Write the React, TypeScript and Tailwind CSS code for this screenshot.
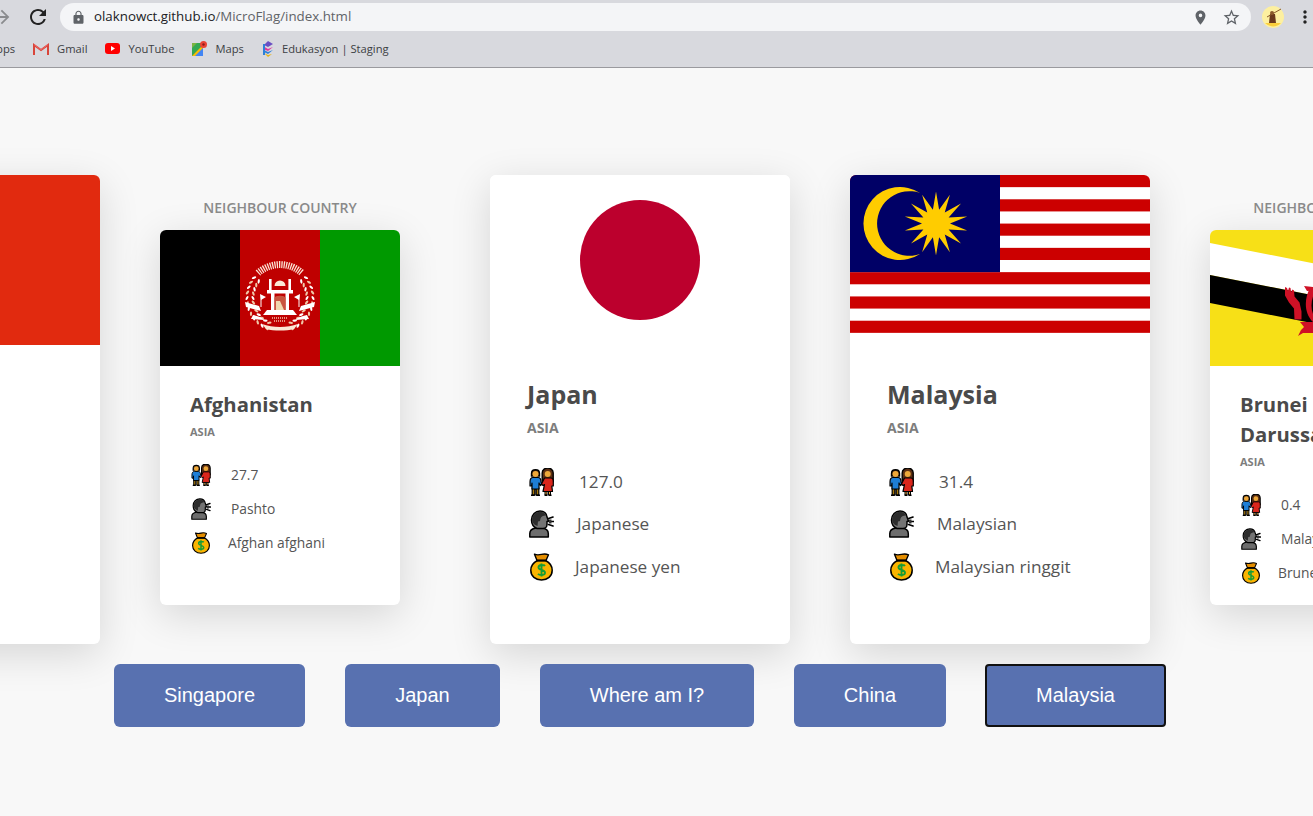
import { MdLock, MdMoreVert, MdPlace, MdRefresh, MdStarBorder, MdArrowForward } from "react-icons/md";

const uiFont = "font-['Open_Sans','Noto_Sans',sans-serif]";

function Couple({ className }: { className: string }) {
  return (
    <svg viewBox="0 0 25 28" className={className}>
      <path d="M13.200 12V5c0-6.500 11-6.500 11 0v8.500h-11z" fill="#5c2f14" stroke="#000" strokeWidth="1.400" />
      <path d="M2.500 5.500C2.500.500 10.500.500 10.500 5.500V8h-8z" fill="#4a2a12" stroke="#000" strokeWidth="1.400" />
      <circle cx="6.500" cy="6" r="3" fill="#eda83a" />
      <circle cx="18.700" cy="6" r="3" fill="#eda83a" />
      <path d="M3.200 20v7h2.600v-6h1.400v6h2.600v-7z" fill="#a9790c" stroke="#000" strokeWidth="1.200" />
      <path d="M1 14c0-3 1-4.500 3-4.500h5c2 0 3 1.500 3 4.500l1 2-1.500 1.500L10 15v6H3v-6l-.500 3H1z" fill="#1e7ed6" stroke="#000" strokeWidth="1.200" strokeLinejoin="round" />
      <path d="M16 23h2v4h-2zM19.500 23h2v4h-2z" fill="#eda83a" stroke="#000" strokeWidth="1" />
      <path d="M15.500 10h6.500c1.500 0 2.300 1.500 2.300 4v4h-1.500l.700 5.500h-9.500l1.500-7-1.500 1-1.500-1.500z" fill="#d9261c" stroke="#000" strokeWidth="1.200" strokeLinejoin="round" />
      <path d="M2 26.500h3.800v1.500H2zM7.200 26.500H11v1.500H7.200zM15.500 26.500h3v1.500h-3zM19.500 26.500h3v1.500h-3z" fill="#000" />
    </svg>
  );
}

function Speaker({ className }: { className: string }) {
  return (
    <svg viewBox="0 0 25 28" className={className}>
      <path d="M.800 27v-3.500c0-3.500 3-5 6-5.500h6c4 .5 6.500 2 6.500 5.500V27z" fill="#6d6d6d" stroke="#000" strokeWidth="1.500" strokeLinejoin="round" />
      <path d="M2.500 10C2.500 4.500 6.500 1 11 1c4 0 6.500 2.500 7 6l1.500 4-1.500.500v3c0 2.500-2 4-4 4H8C4.500 17 2.500 14 2.500 10z" fill="#747474" stroke="#000" strokeWidth="1.500" strokeLinejoin="round" />
      <path d="M3.200 10C3.200 5 7 1.800 11 1.800c3 0 5 1.500 6 3.700-3 .2-5 1-5.500 3l-.5 2.500-2 .5-.5 4.500c-3-1-5.300-3-5.300-6.500z" fill="#2c2c2c" />
      <path d="M19.500 8.500l4.500-1.500M20 11.500h4.800M19.500 14.500l4.500 1.500" stroke="#000" strokeWidth="1.700" strokeLinecap="round" />
      <path d="M20 9.500h2.500v4H20z" fill="#333" />
    </svg>
  );
}

function MoneyBag({ className }: { className: string }) {
  return (
    <svg viewBox="0 0 25 28" className={className}>
      <path d="M8.500 7.500C4.500 9.500 1.800 13 1.800 17.300c0 6 4.700 9.700 10.700 9.700s10.700-3.700 10.700-9.700c0-4.300-2.700-7.800-6.700-9.800z" fill="#fab400" stroke="#000" strokeWidth="1.500" />
      <path d="M5.500 1.200c2.300 1 4.500.800 7 .2s4.700-.6 7 .4l-2.500 5.700H8z" fill="#e58e00" stroke="#000" strokeWidth="1.400" strokeLinejoin="round" />
      <path d="M8 7.500h9" stroke="#000" strokeWidth="1.800" />
      <path d="M16 13c-1-1.400-6.500-1.600-6.500 1.500 0 3 6.500 2 6.500 5.200 0 2.800-5.500 2.800-7 1.100M12.500 10.500v13" fill="none" stroke="#169c36" strokeWidth="1.900" />
    </svg>
  );
}

function AfghanFlag() {
  const sides = [-1, 1];
  const grains = [0, 1, 2, 3, 4, 5, 6, 7, 8, 9, 10, 11];
  const radii = [27, 33];
  return (
    <svg viewBox="0 0 240 136" className="block h-[136px] w-[240px]">
      <rect width="80" height="136" fill="#000" />
      <rect x="80" width="80" height="136" fill="#bf0000" />
      <rect x="160" width="80" height="136" fill="#009900" />
      <g transform="translate(120 68)">
        {sides.map((side) =>
          radii.map((r) =>
            grains.map((i) => {
              const deg = -38 + i * 9.500;
              const a = (deg * Math.PI) / 180;
              const x = side * Math.cos(a) * r;
              const y = Math.sin(a) * r;
              return (
                <ellipse
                  key={`${side}${r}${i}`}
                  cx={x}
                  cy={y}
                  rx="2.300"
                  ry="1.100"
                  fill={i % 2 === 0 ? "#fff" : "#f0c8a8"}
                  transform={`rotate(${side * (deg + 90 + (r === 27 ? 30 : -30))} ${x} ${y})`}
                />
              );
            })
          )
        )}
        <path d="M-22-25A33 33 0 0 1 22-25" fill="none" stroke="#fbe4d4" strokeWidth="7" strokeDasharray="1.300 1" />
        <path d="M-5.500-12a5.500 5.500 0 0 1 11 0z" fill="#fbe7d6" />
        <path d="M-11-19h2.600v11H-11zM8.400-19H11v11H8.400z" fill="#fff" />
        <path d="M-13-8h26v3.500h-26zM-9-4.500h3.500V12H-9zM5.500-4.500H9V12H5.500z" fill="#fff" />
        <path d="M-5.500 12V0c0-3 11-3 11 0v12z" fill="#c9553f" />
        <path d="M-4 12V3h4l4 9z" fill="#f1d9b0" />
        <path d="M-13 12h26l4 5h-34z" fill="#fff" />
        <path d="M-20-4l6 3-5 3zM20-4l-6 3 5 3z" fill="#fff" />
        <path d="M-19-3v12M19-3v12" stroke="#fff" strokeWidth="1" />
        <path d="M-35 4l14 4 2 5-15-4zM35 4l-14 4-2 5 15-4z" fill="#fff" />
        <path d="M-27 17c6 1 9 3 12 5l-14-1zM27 17c-6 1-9 3-12 5l14-1z" fill="#fff" />
        <path d="M-18 26c11 4 25 4 36 0l-4 5c-8 2-20 2-28 0z" fill="#fbe7d6" />
        <path d="M-8 20h16M-6 23h12" stroke="#f2c4a8" strokeWidth="1.500" strokeDasharray="1 1" />
      </g>
    </svg>
  );
}

function JapanFlag() {
  return (
    <svg viewBox="0 0 300 170" className="block h-[170px] w-[300px]">
      <rect width="300" height="170" fill="#fff" />
      <circle cx="150" cy="85" r="60" fill="#bc002d" />
    </svg>
  );
}

function MalaysiaFlag() {
  const stripeHeight = 170 / 14;
  const stripes = [0, 2, 4, 6, 8, 10, 12];
  const points = Array.from({ length: 28 }, (_, i) => {
    const r = i % 2 === 0 ? 32 : 14;
    const a = (i * Math.PI) / 14 - Math.PI / 2;
    return `${86 + r * Math.cos(a)},${48.500 + r * Math.sin(a)}`;
  }).join(" ");
  return (
    <svg viewBox="0 0 300 170" className="block h-[170px] w-[300px]">
      <rect width="300" height="170" fill="#fff" />
      {stripes.map((i) => (
        <rect key={i} y={i * stripeHeight} width="300" height={stripeHeight} fill="#cc0000" />
      ))}
      <rect width="150" height="97.100" fill="#000066" />
      <path d="M70 18A36.500 36.500 0 1 0 70 79A32.300 32.300 0 1 1 70 18z" fill="#ffcc00" />
      <polygon points={points} fill="#ffcc00" />
    </svg>
  );
}

function BruneiFlag() {
  return (
    <svg viewBox="0 0 240 136" className="block h-[136px] w-[240px]">
      <rect width="240" height="136" fill="#f7e017" />
      <path d="M0 13L240 60v32L0 45z" fill="#fff" />
      <path d="M0 45L240 92v28L0 73z" fill="#000" />
      <g fill="#cf1126">
        <path d="M75 57l2 1 1 3 1-3.500 1.500.500.500 4 1.500-2.500 1.500 1 .500 6 5 6 2 9v8h-7l-.500-11-5-6-4-7z" />
        <path d="M100 58c-6 11-6 25 3 34l8 5-5-7c-6-9-6-20 0-30z" />
        <path d="M90 92h13l8 6 .500 5H93l-5 3 3-6 3-3z" />
        <path d="M94 56l9 1 6 3-12 1z" />
      </g>
    </svg>
  );
}

function InfoRow({
  icon,
  text,
  large,
  indent,
}: {
  icon: "people" | "speech" | "money";
  text: string;
  large: boolean;
  indent: string;
}) {
  const iconClass = large ? "h-[28px] w-[25px] shrink-0" : "h-[22px] w-[20px] shrink-0";
  return (
    <div className={large ? "flex h-[42.500px] items-center text-[17.200px]" : "flex h-[34px] items-center text-[13.800px]"}>
      {icon === "people" && <Couple className={iconClass} />}
      {icon === "speech" && <Speaker className={iconClass} />}
      {icon === "money" && <MoneyBag className={iconClass} />}
      <span className={`${indent} whitespace-nowrap text-[#555]`}>{text}</span>
    </div>
  );
}

function LargeCard({
  flag,
  name,
  population,
  language,
  currency,
}: {
  flag: React.ReactNode;
  name: string;
  population: string;
  language: string;
  currency: string;
}) {
  return (
    <div className="h-[469px] w-[300px] shrink-0 overflow-hidden rounded-md bg-white shadow-[0_10px_40px_rgba(0,0,0,0.14)]">
      {flag}
      <div className="px-[37px] pt-[31px]">
        <h2 className="text-[25px] font-bold leading-[36px] text-[#4a4a4a]">{name}</h2>
        <p className="mt-[7px] text-[14px] font-bold leading-[18px] text-[#7d7d7d]">ASIA</p>
        <div className="mt-[23.500px] pl-[2px]">
          <InfoRow icon="people" text={population} large indent="ml-[25px]" />
          <InfoRow icon="speech" text={language} large indent="ml-[23px]" />
          <InfoRow icon="money" text={currency} large indent="ml-[21px]" />
        </div>
      </div>
    </div>
  );
}

function NeighbourCard({
  flag,
  name,
  population,
  language,
  currency,
}: {
  flag: React.ReactNode;
  name: string;
  population: string;
  language: string;
  currency: string;
}) {
  return (
    <div className="w-[240px] shrink-0">
      <p className="h-[55px] pt-[23px] text-center text-[14px] font-semibold leading-[20px] text-[#8a8a8a]">NEIGHBOUR COUNTRY</p>
      <div className="h-[375px] overflow-hidden rounded-md bg-white shadow-[0_10px_40px_rgba(0,0,0,0.14)]">
        {flag}
        <div className="px-[30px] pt-[23px]">
          <h3 className="text-[20.300px] font-bold leading-[30px] text-[#4a4a4a]">{name}</h3>
          <p className="mt-[5.500px] text-[11px] font-bold leading-[14px] text-[#7d7d7d]">ASIA</p>
          <div className="mt-[19.500px] pl-[1px]">
            <InfoRow icon="people" text={population} large={false} indent="ml-[20px]" />
            <InfoRow icon="speech" text={language} large={false} indent="ml-[20px]" />
            <InfoRow icon="money" text={currency} large={false} indent="ml-[17px]" />
          </div>
        </div>
      </div>
    </div>
  );
}

function Bookmark({ icon, label }: { icon: React.ReactNode; label: string }) {
  return (
    <span className="flex items-center gap-[8px] whitespace-nowrap">
      {icon}
      {label}
    </span>
  );
}

function BrowserBar() {
  return (
    <header className={`h-[68px] shrink-0 overflow-hidden border-b border-[#9a9a9e] bg-[#d8d9de] ${uiFont}`}>
      <div className="flex h-[34px] items-center">
        <MdArrowForward className="ml-[-9px] h-[22px] w-[22px] shrink-0 text-[#8a8b8e]" />
        <MdRefresh className="ml-[13px] h-[24px] w-[24px] shrink-0 text-[#222]" />
        <div className="ml-[10px] flex h-[28px] w-[1191px] shrink-0 items-center rounded-full bg-[#f4f5f7] pl-[11px] pr-[10px] text-[13.300px]">
          <MdLock className="h-[15px] w-[15px] text-[#5f6368]" />
          <span className="ml-[8px] text-[#202124]">olaknowct.github.io</span>
          <span className="text-[#5f6368]">/MicroFlag/index.html</span>
          <MdPlace className="ml-auto h-[17px] w-[17px] text-[#5f6368]" />
          <MdStarBorder className="ml-[13px] h-[19px] w-[19px] text-[#5f6368]" />
        </div>
        <svg viewBox="0 0 22 22" className="ml-[11px] h-[22px] w-[22px] shrink-0">
          <circle cx="11" cy="11" r="11" fill="#fdf0a0" />
          <path d="M3 17h16a11 11 0 0 1-16 0z" fill="#fbcf3c" />
          <path d="M8 8h5l1 9H7z" fill="#6b3a1c" />
          <path d="M5 11l14-8" stroke="#8b5a2b" strokeWidth="1" />
          <circle cx="10" cy="7" r="2" fill="#8b5a2b" />
        </svg>
        <MdMoreVert className="ml-[11px] h-[20px] w-[20px] shrink-0 text-[#222]" />
      </div>
      <div className="ml-[-11px] flex h-[30px] items-center gap-[18px] text-[11.200px] text-[#3c4043]">
        <span>Apps</span>
        <Bookmark
          label="Gmail"
          icon={
            <svg viewBox="0 0 16 12" className="h-[12px] w-[16px]">
              <path d="M1 12V2l7 5 7-5v10" fill="none" stroke="#d9453a" strokeWidth="2" />
              <path d="M1 1.500l7 5.500 7-5.500" fill="none" stroke="#e66" strokeWidth="1" />
            </svg>
          }
        />
        <Bookmark
          label="YouTube"
          icon={
            <svg viewBox="0 0 15 11" className="h-[11px] w-[15px]">
              <rect width="15" height="11" rx="3" fill="#f00" />
              <path d="M6 3l4 2.500L6 8z" fill="#fff" />
            </svg>
          }
        />
        <Bookmark
          label="Maps"
          icon={
            <svg viewBox="0 0 15 15" className="h-[15px] w-[15px]">
              <path d="M0 2h11v13H0z" fill="#34a853" />
              <path d="M0 15L11 4v11z" fill="#fbbc04" />
              <path d="M3 15l8-8v8z" fill="#4285f4" />
              <path d="M0 2h5L0 7z" fill="#7cb342" />
              <circle cx="11.500" cy="3.500" r="3.500" fill="#ea4335" />
              <circle cx="11.500" cy="3.500" r="1.200" fill="#8c1d18" />
            </svg>
          }
        />
        <Bookmark
          label="Edukasyon | Staging"
          icon={
            <svg viewBox="0 0 12 16" className="h-[16px] w-[12px]">
              <path d="M6 0l5 3-5 3-4-2z" fill="#6a4fc3" />
              <path d="M1 5l5 3 5-2-5 4-5-2z" fill="#e0379b" />
              <path d="M2 9l4 2 5-2-5 4-4-2z" fill="#2f80d8" />
              <path d="M2 12l4 2 4-1-4 3z" fill="#e7b416" />
              <path d="M1 3h2v11H1z" fill="#2f80d8" />
            </svg>
          }
        />
      </div>
    </header>
  );
}

const actions = [
  { label: "Singapore", width: "w-[191px]" },
  { label: "Japan", width: "w-[155px]" },
  { label: "Where am I?", width: "w-[214px]" },
  { label: "China", width: "w-[152px]" },
];

export default function App() {
  return (
    <div className="flex h-[816px] w-full flex-col overflow-hidden bg-[#f8f8f8]">
      <BrowserBar />
      <main className={`w-[1280px] shrink-0 ${uiFont}`}>
        <div className="ml-[-200px] flex items-start gap-[60px] pt-[107px]">
          <div className="h-[469px] w-[300px] shrink-0 overflow-hidden rounded-md bg-white shadow-[0_10px_40px_rgba(0,0,0,0.14)]">
            <div className="h-[170px] bg-[#e12a0f]" />
          </div>
          <NeighbourCard
            flag={<AfghanFlag />}
            name="Afghanistan"
            population="27.7"
            language="Pashto"
            currency="Afghan afghani"
          />
          <div className="ml-[30px] flex gap-[60px]">
            <LargeCard flag={<JapanFlag />} name="Japan" population="127.0" language="Japanese" currency="Japanese yen" />
            <LargeCard flag={<MalaysiaFlag />} name="Malaysia" population="31.4" language="Malaysian" currency="Malaysian ringgit" />
          </div>
          <NeighbourCard
            flag={<BruneiFlag />}
            name="Brunei Darussalam"
            population="0.4"
            language="Malay"
            currency="Brunei dollar"
          />
        </div>
        <div className="relative z-10 mt-[20px] ml-[114px] flex gap-[40px] font-['Liberation_Sans',sans-serif]">
          {actions.map((action) => (
            <button
              key={action.label}
              className={`h-[63px] ${action.width} rounded-md bg-[#5871b0] pb-[2px] text-[20px] text-white`}
            >
              {action.label}
            </button>
          ))}
          <button className="ml-[-1px] h-[63px] w-[181px] rounded-[4px] border-2 border-[#111] bg-[#5871b0] pb-[2px] text-[20px] text-white">
            Malaysia
          </button>
        </div>
      </main>
    </div>
  );
}
